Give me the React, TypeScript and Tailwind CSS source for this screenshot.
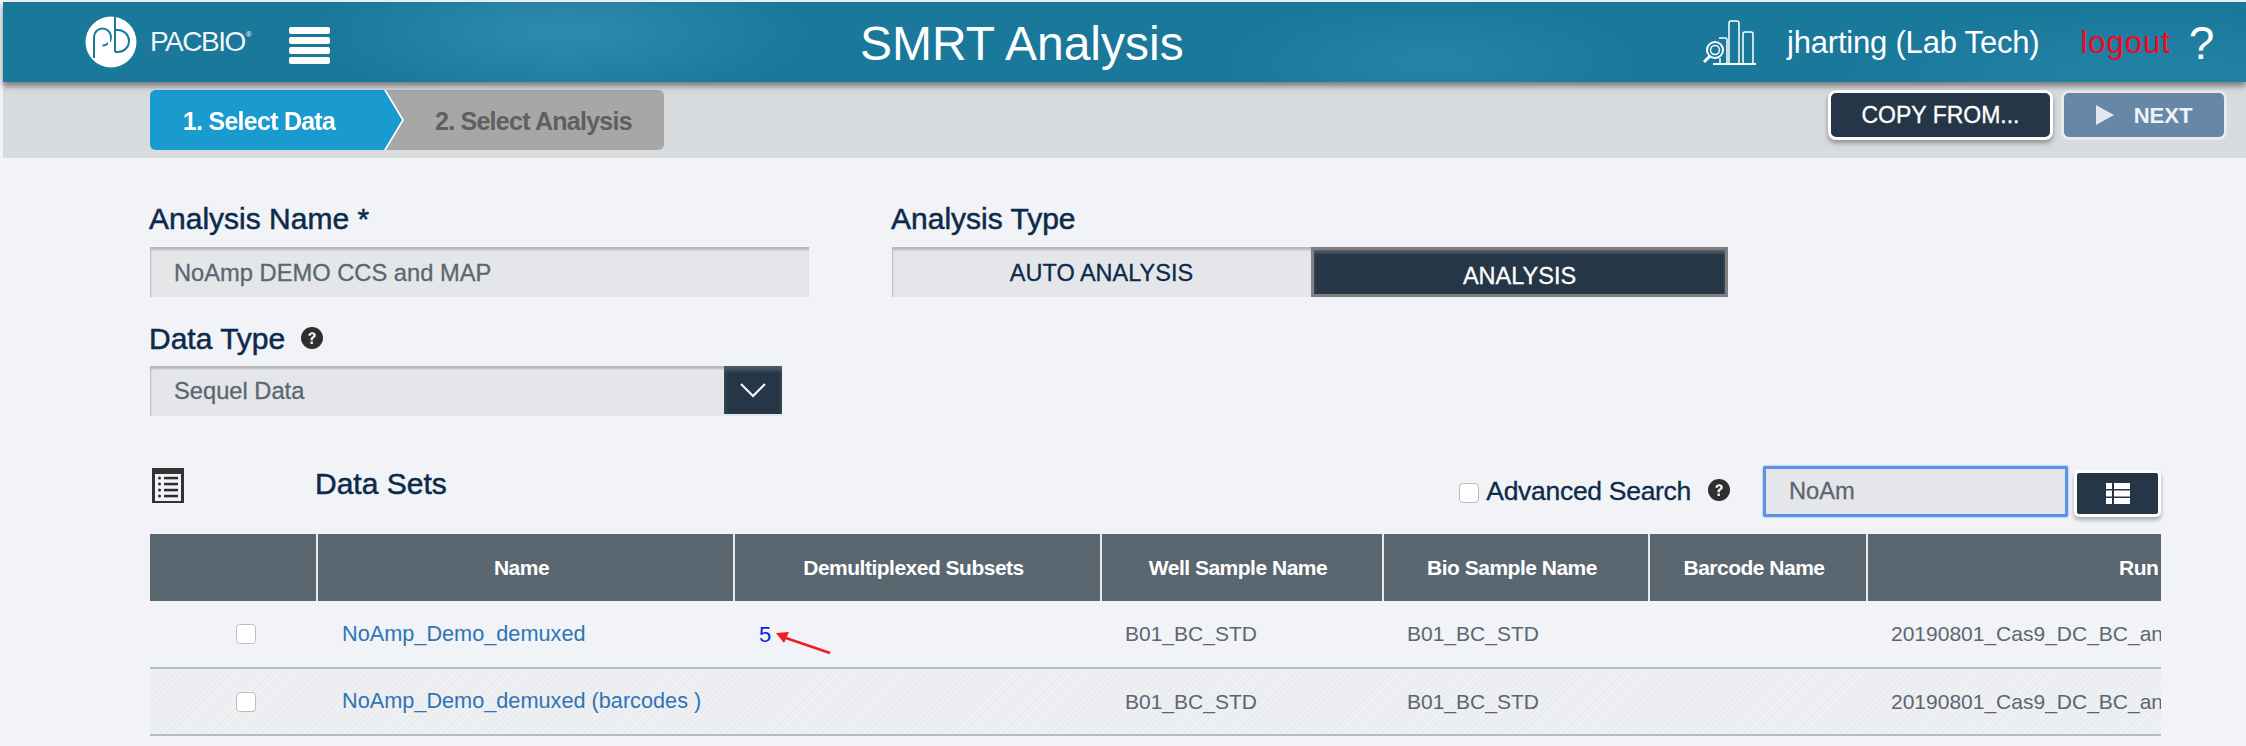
import React from "react";

const font = "font-['Liberation_Sans',Arial,sans-serif]";
const heavy = "[-webkit-text-stroke:0.5px_currentColor]";
const soft = "[-webkit-text-stroke:0.3px_currentColor]";

const HelpIcon = ({ size }: { size: number }) => (
  <svg width={size} height={size} viewBox="0 0 24 24" className="shrink-0">
    <circle cx="12" cy="12" r="12" fill="#2f2f2f" />
    <path d="M8 9.500C8 7 9.800 5.600 12.200 5.600c2.400 0 4 1.400 4 3.400 0 1.600-.9 2.400-2 3.100-.9.600-1.200 1-1.200 1.900v.4h-2.600v-.7c0-1.500.6-2.300 1.700-3 .9-.6 1.400-1 1.400-1.600 0-.7-.6-1.200-1.400-1.200-.9 0-1.500.6-1.500 1.600H8z" fill="#f1f3f7" />
    <rect x="10.300" y="15.800" width="2.700" height="2.700" fill="#f1f3f7" />
  </svg>
);

const Logo = () => (
  <svg width="52" height="52" viewBox="0 0 52 52" className="shrink-0">
    <circle cx="26" cy="26" r="25.500" fill="#ffffff" />
    <g fill="none" stroke="#1b7a9c" strokeWidth="2">
      <path d="M9 42V21a8.500 8.500 0 1 1 8.500 8.500" />
      <path d="M30 0V36" />
      <path d="M30 14h3a11 11 0 0 1 0 22h-3" />
      <path d="M24 22V50" stroke="#ffffff" />
    </g>
  </svg>
);

const ChartIcon = () => (
  <svg width="56" height="46" viewBox="0 0 56 46" fill="none" stroke="#ffffff" strokeWidth="1.500" className="shrink-0">
    <path d="M11 45h43" strokeWidth="2" />
    <path d="M27 44V4q0-2 2-2h6q2 0 2 2v40" />
    <path d="M41 44V15q0-2 2-2h6q2 0 2 2v29" />
    <path d="M17 19h6q2 0 2 2v23" />
    <circle cx="13" cy="31" r="8" strokeWidth="2" />
    <circle cx="13" cy="31" r="4.500" />
    <path d="M8 37l-6 6" strokeWidth="3" />
    <path d="M18 39v5" />
  </svg>
);

const ListIcon = () => (
  <svg width="32" height="35" viewBox="0 0 32 35" className="shrink-0 mt-[1px] ml-[2px]">
    <rect width="32" height="35" fill="#333333" />
    <rect x="3" y="6" width="26" height="27" fill="#f1f3f7" />
    {[10, 16, 22, 28].map((y) => (
      <g key={y} fill="#2c2c2c">
        <circle cx="7.500" cy={y} r="1.500" />
        <rect x="12" y={y - 1.2} width="14" height="2.500" />
      </g>
    ))}
  </svg>
);

const TableIcon = () => (
  <svg width="24" height="21" viewBox="0 0 24 21" fill="#ffffff">
    {[0, 7.500, 15].map((y) => (
      <g key={y}>
        <rect x="0" y={y} width="6" height="6" />
        <rect x="8" y={y} width="16" height="6" />
      </g>
    ))}
  </svg>
);

const Check = () => (
  <span className="block ml-[86px] w-[20px] h-[20px] bg-white border border-[#bcbcbc] rounded-[4px]" />
);

const headers = [
  "",
  "Name",
  "Demultiplexed Subsets",
  "Well Sample Name",
  "Bio Sample Name",
  "Barcode Name",
];

const widths = [
  "w-[167px]",
  "w-[417px]",
  "w-[367px]",
  "w-[282px]",
  "w-[266px]",
  "w-[218px]",
];

const rows = [
  { name: "NoAmp_Demo_demuxed", subsets: "5" },
  { name: "NoAmp_Demo_demuxed (barcodes )", subsets: "" },
];

const stripes =
  "bg-[repeating-linear-gradient(135deg,#e9ebee_0px,#e9ebee_2px,#f0f1f3_2px,#f0f1f3_4px)]";

export default function App() {
  return (
    <div className={`${font} w-[2246px] h-[746px] overflow-hidden bg-[#f1f3f7] flex flex-col`}>
      {/* top bar */}
      <header className="h-[80px] mt-[2px] ml-[3px] shrink-0 flex items-center text-white bg-[#1a789b] bg-[radial-gradient(ellipse_240px_70px_at_560px_30px,#2f8cae,transparent),radial-gradient(ellipse_200px_60px_at_1430px_60px,#2684a6,transparent),radial-gradient(ellipse_300px_60px_at_2150px_70px,#2383a6,transparent)] shadow-[0_4px_6px_rgba(0,0,0,0.45)] relative z-10">
        <div className="ml-[82px] flex items-center w-[775px]">
          <Logo />
          <span className="ml-[13px] text-[28px] tracking-[-1.5px] text-white/95">PACBIO</span>
          <span className="text-[8px] self-start mt-[13px] ml-[1px]">®</span>
          <div className="ml-[37px] mt-[7px] flex flex-col gap-[3px]">
            {[0, 1, 2, 3].map((i) => (
              <span key={i} className="block w-[41px] h-[7px] bg-white rounded-[2px]" />
            ))}
          </div>
        </div>
        <h1 className="text-[48px] leading-none w-[842px] pt-[3px]">SMRT Analysis</h1>
        <ChartIcon />
        <span className="ml-[29px] pt-[3px] text-[31px] tracking-[-0.2px]">jharting (Lab Tech)</span>
        <span className="ml-[41px] pt-[3px] text-[31px] text-[#f5051e] tracking-[1px]">logout</span>
        <span className="ml-[18px] pt-[2px] text-[46px] leading-none">?</span>
      </header>

      {/* steps and actions */}
      <div className="h-[76px] ml-[3px] shrink-0 bg-[#d8dbde] flex pl-[147px] pr-[19px] pt-[8px]">
        <div className="flex w-[514px] h-[60px] rounded-[6px] overflow-hidden bg-[#a7a7a7] font-bold text-[25px] tracking-[-0.75px]">
          <div className="[filter:drop-shadow(2px_0_0_#ffffff)]">
            <div className="w-[252px] h-[60px] pl-[33px] pt-[3px] bg-[#199bcf] text-white flex items-center [clip-path:polygon(0_0,234px_0,252px_50%,234px_100%,0_100%)]">
              1. Select Data
            </div>
          </div>
          <div className="flex-1 pt-[3px] flex items-center text-[#5f5f5f]">
            <span className="ml-[33px]">2. Select Analysis</span>
          </div>
        </div>
        <div className="ml-auto flex gap-[8px] h-[50px]">
          <button className={`${soft} w-[225px] bg-[#253746] border-[3px] border-white rounded-[8px] shadow-[0_3px_5px_rgba(0,0,0,0.35)] text-white text-[23px]`}>
            COPY FROM...
          </button>
          <button className="w-[166px] bg-[#6787a6] border-[3px] border-[#e8eaec] rounded-[8px] text-white/90 text-[22px] font-bold flex items-center justify-center gap-[20px]">
            <span className="w-0 h-0 border-y-[10px] border-y-transparent border-l-[18px] border-l-white/80" />
            NEXT
          </button>
        </div>
      </div>

      {/* form */}
      <main className="pl-[150px] pr-[85px] flex-1 text-[#0c2a4a]">
        <div className="grid grid-cols-[742px_836px] pt-[43px]">
          <div>
            <label className={`${heavy} block text-[30px] leading-[36px] -ml-px`}>Analysis Name *</label>
            <div className={`${soft} mt-[10px] w-[659px] h-[50px] pt-[3px] bg-[#e5e6ea] shadow-[inset_1px_3px_2px_rgba(0,0,0,0.2)] flex items-center pl-[24px] text-[23.7px] text-[#5c6670]`}>
              NoAmp DEMO CCS and MAP
            </div>
          </div>
          <div>
            <label className={`${heavy} block text-[30px] leading-[36px] -ml-px`}>Analysis Type</label>
            <div className={`${soft} mt-[10px] flex h-[50px] text-[23.5px]`}>
              <div className="w-[419px] pt-[4px] bg-[#e5e6ea] shadow-[inset_1px_3px_2px_rgba(0,0,0,0.2)] flex items-center justify-center">
                AUTO ANALYSIS
              </div>
              <div className="flex-1 bg-[#253746] border-[3px] border-[#808080] shadow-[inset_0_3px_3px_rgba(255,255,255,0.2)] text-white flex items-center justify-center pt-[10px]">
                ANALYSIS
              </div>
            </div>
          </div>
        </div>

        <div className="mt-[23px]">
          <div className={`${heavy} flex items-center gap-[16px] h-[36px] -ml-px text-[30px]`}>
            Data Type <HelpIcon size={22} />
          </div>
          <div className={`${soft} mt-[10px] w-[632px] h-[50px] bg-[#e5e6ea] shadow-[inset_1px_3px_2px_rgba(0,0,0,0.2)] flex items-center justify-between pl-[24px] text-[23.7px] text-[#5c6670]`}>
            <span className="pt-[2px]">Sequel Data</span>
            <span className="w-[58px] h-[48px] self-start bg-[#253746] shadow-[inset_0_4px_4px_rgba(255,255,255,0.2)] flex items-center justify-center">
              <svg width="28" height="16" viewBox="0 0 28 16" fill="none" stroke="#ffffff" strokeWidth="2"><path d="M2 2l12 12L26 2" /></svg>
            </span>
          </div>
        </div>

        {/* data sets */}
        <div className="mt-[51px] h-[68px] flex items-start w-[2011px]">
          <ListIcon />
          <h2 className={`${heavy} ml-[131px] text-[30px] leading-[34px]`}>Data Sets</h2>
          <div className="ml-auto flex items-start">
            <span className="mt-[16px] w-[20px] h-[20px] bg-white border border-[#bcbcbc] rounded-[4px]" />
            <span className={`${soft} ml-[7px] mt-[9px] text-[26.5px] leading-[30px] tracking-[-0.3px]`}>Advanced Search</span>
            <span className="ml-[17px] mt-[12px]"><HelpIcon size={22} /></span>
            <div className={`${soft} ml-[33px] mt-[-1px] w-[305px] h-[51px] bg-[#e5e6ea] border-[3px] border-[#5b93e4] rounded-[2px] shadow-[0_0_2px_#5b93e4] flex items-center pl-[23px] text-[23.7px] text-[#5c6670]`}>
              NoAm
            </div>
            <button className="ml-[6px] mt-[3px] w-[87px] h-[47px] bg-[#253746] border-[3px] border-white rounded-[5px] shadow-[0_3px_4px_rgba(0,0,0,0.3)] flex items-center justify-center">
              <TableIcon />
            </button>
          </div>
        </div>

        <div className="w-[2011px] overflow-hidden mt-[-1px]">
          <table className="table-fixed w-[2300px] border-collapse text-[21px]">
            <thead>
              <tr className="h-[67px] bg-[#5a6670] text-white">
                {headers.map((h, i) => (
                  <th key={i} className={`${widths[i]} border-r-2 border-r-[#e8eaec] font-bold pr-[8px] tracking-[-0.5px]`}>{h}</th>
                ))}
                <th className="font-bold text-left pl-[251px] tracking-[-0.5px]">Run</th>
              </tr>
            </thead>
            <tbody className="text-[#5c6670]">
              {rows.map((r, i) => (
                <tr key={r.name} className={`h-[67px] border-t-0 border-b-2 border-b-[#b5bdc4] ${i === 1 ? stripes : ""}`}>
                  <td><Check /></td>
                  <td className="pl-[25px] text-[21.7px] text-[#2f74b5]">{r.name}</td>
                  <td className="pl-[25px] text-[22px] text-[#0a1ee6]">{r.subsets}</td>
                  <td className="pl-[24px]">B01_BC_STD</td>
                  <td className="pl-[24px]">B01_BC_STD</td>
                  <td />
                  <td className="pl-[24px] whitespace-nowrap">20190801_Cas9_DC_BC_and_MAP</td>
                </tr>
              ))}
            </tbody>
          </table>
        </div>

        {/* red annotation arrow */}
        <svg width="62" height="30" viewBox="0 0 62 30" className="absolute left-[772px] top-[626px]">
          <path d="M58 27L11 11" stroke="#ee1c25" strokeWidth="2.500" />
          <path d="M4 7l13-1-5 11z" fill="#ee1c25" />
        </svg>
      </main>
    </div>
  );
}
